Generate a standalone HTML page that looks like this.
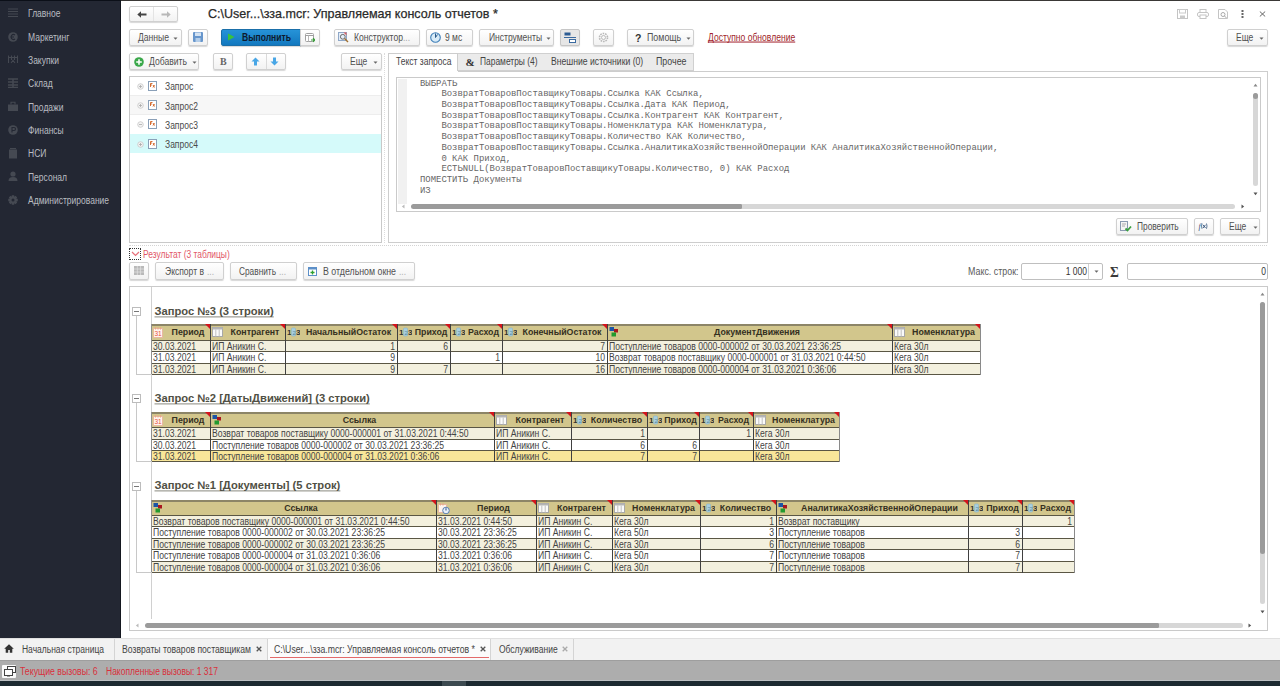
<!DOCTYPE html><html><head><meta charset="utf-8"><style>
*{margin:0;padding:0;box-sizing:border-box}
html,body{width:1280px;height:686px;overflow:hidden;background:#fff;font-family:"Liberation Sans",sans-serif;color:#4a4a4a}
div,span,svg{position:absolute}
.t{white-space:nowrap}
.btn{border:1px solid #d0d0d0;border-radius:2px;background:linear-gradient(#fff,#f2f2f2);box-shadow:0 1px 1px rgba(0,0,0,.16)}
.mono{font-family:"Liberation Mono",monospace;font-size:8.94px;white-space:pre;line-height:10.72px;color:#666}
</style></head><body>
<div style="left:0px;top:0px;width:121px;height:638px;background:#232733"></div>
<div style="left:121px;top:0px;width:1159px;height:1px;background:#3a3836"></div>
<div style="left:0px;top:0px;width:121px;height:1px;background:#0b0f18"></div>
<div style="left:120px;top:0px;width:1px;height:638px;background:#14171f"></div>
<span class="t" style="left:28px;top:16.6px;font-size:10px;line-height:12.0px;font-weight:normal;font-family:'Liberation Sans';color:#b9bcc1;transform:translateY(-9.46px) scaleX(0.85);transform-origin:0 0;">Главное</span>
<span class="t" style="left:28px;top:40.5px;font-size:10px;line-height:12.0px;font-weight:normal;font-family:'Liberation Sans';color:#b9bcc1;transform:translateY(-9.46px) scaleX(0.85);transform-origin:0 0;">Маркетинг</span>
<span class="t" style="left:28px;top:64.3px;font-size:10px;line-height:12.0px;font-weight:normal;font-family:'Liberation Sans';color:#b9bcc1;transform:translateY(-9.46px) scaleX(0.85);transform-origin:0 0;">Закупки</span>
<span class="t" style="left:28px;top:86.89999999999999px;font-size:10px;line-height:12.0px;font-weight:normal;font-family:'Liberation Sans';color:#b9bcc1;transform:translateY(-9.46px) scaleX(0.85);transform-origin:0 0;">Склад</span>
<span class="t" style="left:28px;top:110.69999999999999px;font-size:10px;line-height:12.0px;font-weight:normal;font-family:'Liberation Sans';color:#b9bcc1;transform:translateY(-9.46px) scaleX(0.85);transform-origin:0 0;">Продажи</span>
<span class="t" style="left:28px;top:134.0px;font-size:10px;line-height:12.0px;font-weight:normal;font-family:'Liberation Sans';color:#b9bcc1;transform:translateY(-9.46px) scaleX(0.85);transform-origin:0 0;">Финансы</span>
<span class="t" style="left:28px;top:157.1px;font-size:10px;line-height:12.0px;font-weight:normal;font-family:'Liberation Sans';color:#b9bcc1;transform:translateY(-9.46px) scaleX(0.85);transform-origin:0 0;">НСИ</span>
<span class="t" style="left:28px;top:181.1px;font-size:10px;line-height:12.0px;font-weight:normal;font-family:'Liberation Sans';color:#b9bcc1;transform:translateY(-9.46px) scaleX(0.85);transform-origin:0 0;">Персонал</span>
<span class="t" style="left:28px;top:204.2px;font-size:10px;line-height:12.0px;font-weight:normal;font-family:'Liberation Sans';color:#b9bcc1;transform:translateY(-9.46px) scaleX(0.85);transform-origin:0 0;">Администрирование</span>
<div class="btn" style="left:129px;top:6px;width:49px;height:16px;"></div>
<div style="left:153px;top:7px;width:1px;height:14px;background:#e4e4e4"></div>
<span class="t" style="left:208px;top:19px;font-size:12.6px;line-height:15.12px;font-weight:normal;font-family:'Liberation Sans';color:#2a2a2a;transform:translateY(-11.93px) scaleX(0.9952);transform-origin:0 0;-webkit-text-stroke:0.25px #2a2a2a">C:\User...\зза.mcr: Управляемая консоль отчетов *</span>
<div class="btn" style="left:129px;top:29px;width:53px;height:17px;"></div>
<span class="t" style="left:138px;top:41px;font-size:10px;line-height:12.0px;font-weight:normal;font-family:'Liberation Sans';color:#505050;transform:translateY(-9.46px) scaleX(0.858);transform-origin:0 0;">Данные</span>
<div class="btn" style="left:188px;top:29px;width:20px;height:17px;"></div>
<div style="left:221px;top:29px;width:80px;height:17px;background:linear-gradient(#2693d8,#1278bf);border:1px solid #1a6fa9;border-radius:2px 0 0 2px;box-shadow:0 1px 1px rgba(0,0,0,.16)"></div>
<div class="btn" style="left:300px;top:29px;width:20px;height:17px;border-radius:0 2px 2px 0"></div>
<span class="t" style="left:241.7px;top:41px;font-size:10px;line-height:12.0px;font-weight:bold;font-family:'Liberation Sans';color:#0d1a2e;transform:translateY(-9.46px) scaleX(0.856);transform-origin:0 0;">Выполнить</span>
<div class="btn" style="left:334px;top:29px;width:86px;height:17px;"></div>
<span class="t" style="left:353.5px;top:41px;font-size:10px;line-height:12.0px;font-weight:normal;font-family:'Liberation Sans';color:#505050;transform:translateY(-9.46px) scaleX(0.8594);transform-origin:0 0;">Конструктор</span>
<span class="t" style="left:403px;top:41px;font-size:10px;line-height:12.0px;font-weight:normal;font-family:'Liberation Sans';color:#a8a8a8;transform:translateY(-9.46px) scaleX(0.85);transform-origin:0 0;">...</span>
<div class="btn" style="left:426px;top:29px;width:47px;height:17px;"></div>
<span class="t" style="left:445.4px;top:41px;font-size:10px;line-height:12.0px;font-weight:normal;font-family:'Liberation Sans';color:#505050;transform:translateY(-9.46px) scaleX(0.85);transform-origin:0 0;">9 мс</span>
<div class="btn" style="left:479px;top:29px;width:75px;height:17px;"></div>
<span class="t" style="left:488.5px;top:41px;font-size:10px;line-height:12.0px;font-weight:normal;font-family:'Liberation Sans';color:#505050;transform:translateY(-9.46px) scaleX(0.85);transform-origin:0 0;">Инструменты</span>
<div style="left:560px;top:29px;width:20px;height:17px;background:#e6e6e6;border:1px solid #c6c6c6;border-radius:2px;box-shadow:0 1px 1px rgba(0,0,0,.12)"></div>
<div class="btn" style="left:593px;top:29px;width:21px;height:17px;"></div>
<div class="btn" style="left:627px;top:29px;width:67px;height:17px;"></div>
<span class="t" style="left:646.9px;top:41px;font-size:10px;line-height:12.0px;font-weight:normal;font-family:'Liberation Sans';color:#505050;transform:translateY(-9.46px) scaleX(0.8855);transform-origin:0 0;">Помощь</span>
<span class="t" style="left:708.3px;top:41px;font-size:10px;line-height:12.0px;font-weight:normal;font-family:'Liberation Sans';color:#a11f2b;transform:translateY(-9.46px) scaleX(0.8554);transform-origin:0 0;text-decoration:underline;text-decoration-skip-ink:none">Доступно обновление</span>
<div class="btn" style="left:1227px;top:29px;width:41px;height:17px;"></div>
<span class="t" style="left:1236px;top:41px;font-size:10px;line-height:12.0px;font-weight:normal;font-family:'Liberation Sans';color:#505050;transform:translateY(-9.46px) scaleX(0.85);transform-origin:0 0;">Еще</span>
<div class="btn" style="left:129px;top:53px;width:70px;height:17px;"></div>
<span class="t" style="left:148.75px;top:65px;font-size:10px;line-height:12.0px;font-weight:normal;font-family:'Liberation Sans';color:#505050;transform:translateY(-9.46px) scaleX(0.8598);transform-origin:0 0;">Добавить</span>
<div class="btn" style="left:213px;top:53px;width:20px;height:17px;"></div>
<div class="btn" style="left:246px;top:53px;width:40px;height:17px;"></div>
<div style="left:266px;top:54px;width:1px;height:15px;background:#dadada"></div>
<div class="btn" style="left:341px;top:53px;width:41px;height:17px;"></div>
<span class="t" style="left:350px;top:65px;font-size:10px;line-height:12.0px;font-weight:normal;font-family:'Liberation Sans';color:#505050;transform:translateY(-9.46px) scaleX(0.85);transform-origin:0 0;">Еще</span>
<div style="left:384px;top:53px;width:1px;height:190px;border-left:1px dotted #dcdcdc"></div>
<div style="left:129px;top:76px;width:253px;height:167px;border:1px solid #c9c9c9;background:#fff"></div>
<div style="left:130px;top:95px;width:251px;height:20px;background:#f7f7f7;border-top:1px solid #ededed;border-bottom:1px solid #ededed"></div>
<div style="left:130px;top:134px;width:251px;height:19px;background:#d5fafa"></div>
<span class="t" style="left:165.4px;top:90.3px;font-size:10px;line-height:12.0px;font-weight:normal;font-family:'Liberation Sans';color:#4a4a4a;transform:translateY(-9.46px) scaleX(0.85);transform-origin:0 0;">Запрос</span>
<span class="t" style="left:165.4px;top:109.8px;font-size:10px;line-height:12.0px;font-weight:normal;font-family:'Liberation Sans';color:#4a4a4a;transform:translateY(-9.46px) scaleX(0.85);transform-origin:0 0;">Запрос2</span>
<span class="t" style="left:165.4px;top:128.8px;font-size:10px;line-height:12.0px;font-weight:normal;font-family:'Liberation Sans';color:#4a4a4a;transform:translateY(-9.46px) scaleX(0.85);transform-origin:0 0;">Запрос3</span>
<span class="t" style="left:165.4px;top:148.3px;font-size:10px;line-height:12.0px;font-weight:normal;font-family:'Liberation Sans';color:#4a4a4a;transform:translateY(-9.46px) scaleX(0.85);transform-origin:0 0;">Запрос4</span>
<div style="left:388px;top:71px;width:880px;height:172px;border:1px solid #cdcdcd"></div>
<div style="left:388px;top:53px;width:70px;height:19px;background:#fff;border:1px solid #cdcdcd;border-bottom:none"></div>
<div style="left:458px;top:53px;width:86px;height:18px;background:#ebebeb;border:1px solid #d0d0d0;border-left:none"></div>
<div style="left:543px;top:53px;width:107px;height:18px;background:#ebebeb;border:1px solid #d0d0d0;border-left:none"></div>
<div style="left:649px;top:53px;width:45px;height:18px;background:#ebebeb;border:1px solid #d0d0d0;border-left:none"></div>
<div style="left:389px;top:71px;width:69px;height:1px;background:#fff"></div>
<span class="t" style="left:395.9px;top:65px;font-size:10px;line-height:12.0px;font-weight:normal;font-family:'Liberation Sans';color:#444;transform:translateY(-9.46px) scaleX(0.8512);transform-origin:0 0;">Текст запроса</span>
<span class="t" style="left:479.6px;top:65px;font-size:10px;line-height:12.0px;font-weight:normal;font-family:'Liberation Sans';color:#444;transform:translateY(-9.46px) scaleX(0.8418);transform-origin:0 0;">Параметры (4)</span>
<span class="t" style="left:551.3px;top:65px;font-size:10px;line-height:12.0px;font-weight:normal;font-family:'Liberation Sans';color:#444;transform:translateY(-9.46px) scaleX(0.8625);transform-origin:0 0;">Внешние источники (0)</span>
<span class="t" style="left:656px;top:65px;font-size:10px;line-height:12.0px;font-weight:normal;font-family:'Liberation Sans';color:#444;transform:translateY(-9.46px) scaleX(0.886);transform-origin:0 0;">Прочее</span>
<div style="left:396px;top:77px;width:865px;height:135px;border:1px solid #cacaca;background:#fff"></div>
<div style="left:398px;top:79px;width:9px;height:125px;background:#f1f1f1"></div>
<div class="mono" style="left:420px;top:78.5px;width:830px;height:121px;overflow:hidden">ВЫБРАТЬ
    ВозвратТоваровПоставщикуТовары.Ссылка КАК Ссылка,
    ВозвратТоваровПоставщикуТовары.Ссылка.Дата КАК Период,
    ВозвратТоваровПоставщикуТовары.Ссылка.Контрагент КАК Контрагент,
    ВозвратТоваровПоставщикуТовары.Номенклатура КАК Номенклатура,
    ВозвратТоваровПоставщикуТовары.Количество КАК Количество,
    ВозвратТоваровПоставщикуТовары.Ссылка.АналитикаХозяйственнойОперации КАК АналитикаХозяйственнойОперации,
    0 КАК Приход,
    ЕСТЬNULL(ВозвратТоваровПоставщикуТовары.Количество, 0) КАК Расход
ПОМЕСТИТЬ Документы
ИЗ</div>
<div style="left:411px;top:204px;width:332px;height:5px;background:#9b9b9b;border-radius:3px"></div>
<div style="left:742px;top:204px;width:493px;height:5px;background:#d7d7d7;border-radius:0 3px 3px 0"></div>
<div style="left:1253px;top:93px;width:5px;height:93px;background:#d7d7d7;border-radius:3px"></div>
<div style="left:1253px;top:93px;width:5px;height:6px;background:#9b9b9b;border-radius:3px"></div>
<div class="btn" style="left:1116px;top:218px;width:72px;height:17px;"></div>
<span class="t" style="left:1136.6px;top:230px;font-size:10px;line-height:12.0px;font-weight:normal;font-family:'Liberation Sans';color:#505050;transform:translateY(-9.46px) scaleX(0.8338);transform-origin:0 0;">Проверить</span>
<div class="btn" style="left:1194px;top:218px;width:20px;height:17px;"></div>
<div class="btn" style="left:1220px;top:218px;width:40px;height:17px;"></div>
<span class="t" style="left:1229.2px;top:230px;font-size:10px;line-height:12.0px;font-weight:normal;font-family:'Liberation Sans';color:#505050;transform:translateY(-9.46px) scaleX(0.85);transform-origin:0 0;">Еще</span>
<div style="left:129px;top:245px;width:1138px;height:1px;border-top:1px dotted #d4d4d4"></div>
<div style="left:129px;top:248px;width:12px;height:12px;border:1px dotted #333"></div>
<span class="t" style="left:142.8px;top:257.5px;font-size:10px;line-height:12.0px;font-weight:normal;font-family:'Liberation Sans';color:#e25868;transform:translateY(-9.46px) scaleX(0.8425);transform-origin:0 0;">Результат (3 таблицы)</span>
<div class="btn" style="left:129px;top:262px;width:20px;height:18px;"></div>
<div class="btn" style="left:155px;top:262px;width:69px;height:18px;"></div>
<span class="t" style="left:164.7px;top:275px;font-size:10px;line-height:12.0px;font-weight:normal;font-family:'Liberation Sans';color:#505050;transform:translateY(-9.46px) scaleX(0.854);transform-origin:0 0;">Экспорт в</span>
<span class="t" style="left:207px;top:275px;font-size:10px;line-height:12.0px;font-weight:normal;font-family:'Liberation Sans';color:#b0b0b0;transform:translateY(-9.46px) scaleX(0.85);transform-origin:0 0;">...</span>
<div class="btn" style="left:230px;top:262px;width:67px;height:18px;"></div>
<span class="t" style="left:239.4px;top:275px;font-size:10px;line-height:12.0px;font-weight:normal;font-family:'Liberation Sans';color:#505050;transform:translateY(-9.46px) scaleX(0.8304);transform-origin:0 0;">Сравнить</span>
<span class="t" style="left:279px;top:275px;font-size:10px;line-height:12.0px;font-weight:normal;font-family:'Liberation Sans';color:#b0b0b0;transform:translateY(-9.46px) scaleX(0.85);transform-origin:0 0;">...</span>
<div class="btn" style="left:303px;top:262px;width:112px;height:18px;"></div>
<span class="t" style="left:322.8px;top:275px;font-size:10px;line-height:12.0px;font-weight:normal;font-family:'Liberation Sans';color:#505050;transform:translateY(-9.46px) scaleX(0.8805);transform-origin:0 0;">В отдельном окне</span>
<span class="t" style="left:399px;top:275px;font-size:10px;line-height:12.0px;font-weight:normal;font-family:'Liberation Sans';color:#b0b0b0;transform:translateY(-9.46px) scaleX(0.85);transform-origin:0 0;">...</span>
<span class="t" style="left:967.5px;top:275px;font-size:10px;line-height:12.0px;font-weight:normal;font-family:'Liberation Sans';color:#5a5a5a;transform:translateY(-9.46px) scaleX(0.8874);transform-origin:0 0;">Макс. строк:</span>
<div style="left:1021px;top:263px;width:82px;height:17px;border:1px solid #bfbfbf;border-radius:2px;background:#fff"></div>
<div style="left:1088px;top:264px;width:1px;height:15px;background:#d0d0d0"></div>
<span class="t" style="left:1086.5px;top:275px;font-size:10px;line-height:12.0px;font-weight:normal;font-family:'Liberation Sans';color:#333;transform:translateY(-9.46px) translateX(-100%) scaleX(0.85);transform-origin:100% 0;">1 000</span>
<span class="t" style="left:1110.3px;top:277px;font-size:15px;line-height:18.0px;font-weight:bold;font-family:'Liberation Serif';color:#3a3a3a;transform:translateY(-14.20px) scaleX(0.9);transform-origin:0 0;">Σ</span>
<div style="left:1127px;top:263px;width:141px;height:17px;border:1px solid #bfbfbf;border-radius:2px;background:#fff"></div>
<span class="t" style="left:1266px;top:275px;font-size:10px;line-height:12.0px;font-weight:normal;font-family:'Liberation Sans';color:#333;transform:translateY(-9.46px) translateX(-100%) scaleX(0.85);transform-origin:100% 0;">0</span>
<div style="left:129px;top:286px;width:1139px;height:345px;border:1px solid #cacaca;background:#fff"></div>
<div style="left:151px;top:287px;width:1px;height:332px;background:#d0d0d0"></div>
<div style="left:1260px;top:302px;width:5px;height:302px;background:#d7d7d7;border-radius:3px"></div>
<div style="left:1260px;top:302px;width:5px;height:252px;background:#9b9b9b;border-radius:3px"></div>
<div style="left:145px;top:623px;width:1015px;height:5px;background:#9b9b9b;border-radius:3px"></div>
<div style="left:1159px;top:623px;width:84px;height:5px;background:#d7d7d7;border-radius:0 3px 3px 0"></div>
<span class="t" style="left:154.5px;top:315.5px;font-size:11.2px;line-height:13.44px;font-weight:bold;font-family:'Liberation Sans';color:#505044;transform:translateY(-10.60px) scaleX(1);transform-origin:0 0;text-decoration:underline;text-decoration-color:#8a8a80;text-decoration-skip-ink:none">Запрос №3 (3 строки)</span>
<div style="left:151px;top:324px;width:830px;height:16px;background:#d2c68c"></div>
<div style="left:151px;top:340px;width:830px;height:11px;background:#f3f0de"></div>
<div style="left:151px;top:351px;width:830px;height:12px;background:#fff"></div>
<div style="left:151px;top:363px;width:830px;height:11px;background:#f3f0de"></div>
<div style="left:151px;top:324px;width:830px;height:2px;background:#8c8567"></div>
<div style="left:151px;top:340px;width:830px;height:1px;background:#5a5644"></div>
<div style="left:151px;top:351px;width:830px;height:1px;background:#5a5644"></div>
<div style="left:151px;top:363px;width:830px;height:1px;background:#5a5644"></div>
<div style="left:151px;top:374px;width:830px;height:1px;background:#5a5644"></div>
<div style="left:210px;top:324px;width:1px;height:51px;background:#404040"></div>
<div style="left:285px;top:324px;width:1px;height:51px;background:#404040"></div>
<div style="left:397px;top:324px;width:1px;height:51px;background:#404040"></div>
<div style="left:450px;top:324px;width:1px;height:51px;background:#404040"></div>
<div style="left:502px;top:324px;width:1px;height:51px;background:#404040"></div>
<div style="left:607px;top:324px;width:1px;height:51px;background:#404040"></div>
<div style="left:892px;top:324px;width:1px;height:51px;background:#404040"></div>
<div style="left:151px;top:324px;width:1px;height:51px;background:#8f8f8f"></div>
<div style="left:980px;top:324px;width:1px;height:51px;background:#8a8a8a"></div>
<div style="left:205px;top:324px;width:0;height:0;border-top:5px solid #d4141c;border-left:5px solid transparent"></div>
<span class="t" style="left:188.0px;top:335.4px;font-size:8.8px;line-height:10.56px;font-weight:bold;font-family:'Liberation Sans';color:#34301f;transform:translateY(-8.33px) translateX(-50%) scaleX(1);transform-origin:50% 0;">Период</span>
<svg style="left:153px;top:327px;" width="11" height="11" viewBox="0 0 11 11"><rect x="0.5" y="1.5" width="9" height="9" fill="#fff4ee" stroke="#e8b8a0"/><path d="M2.5 0 V2.5 M5 0 V2.5 M7.5 0 V2.5" stroke="#e8a888"/><text x="5" y="9" font-size="6.5" font-family="Liberation Sans" fill="#e8503a" text-anchor="middle">31</text></svg>
<div style="left:280px;top:324px;width:0;height:0;border-top:5px solid #d4141c;border-left:5px solid transparent"></div>
<span class="t" style="left:255.0px;top:335.4px;font-size:8.8px;line-height:10.56px;font-weight:bold;font-family:'Liberation Sans';color:#34301f;transform:translateY(-8.33px) translateX(-50%) scaleX(1);transform-origin:50% 0;">Контрагент</span>
<svg style="left:212px;top:327px;" width="11" height="10" viewBox="0 0 11 10"><rect x="0.5" y="0.5" width="10" height="9" fill="#fafafa" stroke="#a8a8a8"/><rect x="0.5" y="0.5" width="10" height="2" fill="#b5b5b5"/><path d="M3.8 2.5 V9.5 M7.2 2.5 V9.5" stroke="#c0c0c0"/></svg>
<div style="left:392px;top:324px;width:0;height:0;border-top:5px solid #d4141c;border-left:5px solid transparent"></div>
<span class="t" style="left:348.5px;top:335.4px;font-size:8.8px;line-height:10.56px;font-weight:bold;font-family:'Liberation Sans';color:#34301f;transform:translateY(-8.33px) translateX(-50%) scaleX(1);transform-origin:50% 0;">НачальныйОстаток</span>
<svg style="left:287px;top:327px;" width="13" height="10" viewBox="0 0 13 10"><text x="0" y="8" font-size="8" font-weight="bold" font-family="Liberation Sans" fill="#333">1</text><rect x="4.5" y="1" width="4" height="8" rx="1" fill="#a7cfe0" stroke="#86b4c8" stroke-width="0.6"/><text x="5.4" y="7.6" font-size="6" font-family="Liberation Sans" fill="#5a8aa0">2</text><text x="9" y="8" font-size="8" font-weight="bold" font-family="Liberation Sans" fill="#333">3</text></svg>
<div style="left:445px;top:324px;width:0;height:0;border-top:5px solid #d4141c;border-left:5px solid transparent"></div>
<span class="t" style="left:431.0px;top:335.4px;font-size:8.8px;line-height:10.56px;font-weight:bold;font-family:'Liberation Sans';color:#34301f;transform:translateY(-8.33px) translateX(-50%) scaleX(1);transform-origin:50% 0;">Приход</span>
<svg style="left:399px;top:327px;" width="13" height="10" viewBox="0 0 13 10"><text x="0" y="8" font-size="8" font-weight="bold" font-family="Liberation Sans" fill="#333">1</text><rect x="4.5" y="1" width="4" height="8" rx="1" fill="#a7cfe0" stroke="#86b4c8" stroke-width="0.6"/><text x="5.4" y="7.6" font-size="6" font-family="Liberation Sans" fill="#5a8aa0">2</text><text x="9" y="8" font-size="8" font-weight="bold" font-family="Liberation Sans" fill="#333">3</text></svg>
<div style="left:497px;top:324px;width:0;height:0;border-top:5px solid #d4141c;border-left:5px solid transparent"></div>
<span class="t" style="left:483.5px;top:335.4px;font-size:8.8px;line-height:10.56px;font-weight:bold;font-family:'Liberation Sans';color:#34301f;transform:translateY(-8.33px) translateX(-50%) scaleX(1);transform-origin:50% 0;">Расход</span>
<svg style="left:452px;top:327px;" width="13" height="10" viewBox="0 0 13 10"><text x="0" y="8" font-size="8" font-weight="bold" font-family="Liberation Sans" fill="#333">1</text><rect x="4.5" y="1" width="4" height="8" rx="1" fill="#a7cfe0" stroke="#86b4c8" stroke-width="0.6"/><text x="5.4" y="7.6" font-size="6" font-family="Liberation Sans" fill="#5a8aa0">2</text><text x="9" y="8" font-size="8" font-weight="bold" font-family="Liberation Sans" fill="#333">3</text></svg>
<div style="left:602px;top:324px;width:0;height:0;border-top:5px solid #d4141c;border-left:5px solid transparent"></div>
<span class="t" style="left:562.0px;top:335.4px;font-size:8.8px;line-height:10.56px;font-weight:bold;font-family:'Liberation Sans';color:#34301f;transform:translateY(-8.33px) translateX(-50%) scaleX(1);transform-origin:50% 0;">КонечныйОстаток</span>
<svg style="left:504px;top:327px;" width="13" height="10" viewBox="0 0 13 10"><text x="0" y="8" font-size="8" font-weight="bold" font-family="Liberation Sans" fill="#333">1</text><rect x="4.5" y="1" width="4" height="8" rx="1" fill="#a7cfe0" stroke="#86b4c8" stroke-width="0.6"/><text x="5.4" y="7.6" font-size="6" font-family="Liberation Sans" fill="#5a8aa0">2</text><text x="9" y="8" font-size="8" font-weight="bold" font-family="Liberation Sans" fill="#333">3</text></svg>
<div style="left:887px;top:324px;width:0;height:0;border-top:5px solid #d4141c;border-left:5px solid transparent"></div>
<span class="t" style="left:757.0px;top:335.4px;font-size:8.8px;line-height:10.56px;font-weight:bold;font-family:'Liberation Sans';color:#34301f;transform:translateY(-8.33px) translateX(-50%) scaleX(1);transform-origin:50% 0;">ДокументДвижения</span>
<svg style="left:609px;top:327px;" width="11" height="11" viewBox="0 0 11 11"><rect x="0.5" y="0" width="4.5" height="4" fill="#1b55a6"/><rect x="5" y="2" width="4" height="3.5" fill="#a8161f"/><rect x="2.5" y="5.5" width="4.5" height="4" fill="#229a2e"/></svg>
<div style="left:975px;top:324px;width:0;height:0;border-top:5px solid #d4141c;border-left:5px solid transparent"></div>
<span class="t" style="left:943.5px;top:335.4px;font-size:8.8px;line-height:10.56px;font-weight:bold;font-family:'Liberation Sans';color:#34301f;transform:translateY(-8.33px) translateX(-50%) scaleX(1);transform-origin:50% 0;">Номенклатура</span>
<svg style="left:894px;top:327px;" width="11" height="10" viewBox="0 0 11 10"><rect x="0.5" y="0.5" width="10" height="9" fill="#fafafa" stroke="#a8a8a8"/><rect x="0.5" y="0.5" width="10" height="2" fill="#b5b5b5"/><path d="M3.8 2.5 V9.5 M7.2 2.5 V9.5" stroke="#c0c0c0"/></svg>
<span class="t" style="left:153px;top:350.2px;font-size:10px;line-height:12.0px;font-weight:normal;font-family:'Liberation Sans';color:#444;transform:translateY(-9.46px) scaleX(0.86);transform-origin:0 0;">30.03.2021</span>
<span class="t" style="left:212px;top:350.2px;font-size:10px;line-height:12.0px;font-weight:normal;font-family:'Liberation Sans';color:#444;transform:translateY(-9.46px) scaleX(0.86);transform-origin:0 0;">ИП Аникин С.</span>
<span class="t" style="left:394.5px;top:350.2px;font-size:10px;line-height:12.0px;font-weight:normal;font-family:'Liberation Sans';color:#444;transform:translateY(-9.46px) translateX(-100%) scaleX(0.86);transform-origin:100% 0;">1</span>
<span class="t" style="left:447.5px;top:350.2px;font-size:10px;line-height:12.0px;font-weight:normal;font-family:'Liberation Sans';color:#444;transform:translateY(-9.46px) translateX(-100%) scaleX(0.86);transform-origin:100% 0;">6</span>
<span class="t" style="left:604.5px;top:350.2px;font-size:10px;line-height:12.0px;font-weight:normal;font-family:'Liberation Sans';color:#444;transform:translateY(-9.46px) translateX(-100%) scaleX(0.86);transform-origin:100% 0;">7</span>
<span class="t" style="left:609px;top:350.2px;font-size:10px;line-height:12.0px;font-weight:normal;font-family:'Liberation Sans';color:#444;transform:translateY(-9.46px) scaleX(0.86);transform-origin:0 0;">Поступление товаров 0000-000002 от 30.03.2021 23:36:25</span>
<span class="t" style="left:894px;top:350.2px;font-size:10px;line-height:12.0px;font-weight:normal;font-family:'Liberation Sans';color:#444;transform:translateY(-9.46px) scaleX(0.86);transform-origin:0 0;">Кега 30л</span>
<span class="t" style="left:153px;top:361.2px;font-size:10px;line-height:12.0px;font-weight:normal;font-family:'Liberation Sans';color:#444;transform:translateY(-9.46px) scaleX(0.86);transform-origin:0 0;">31.03.2021</span>
<span class="t" style="left:212px;top:361.2px;font-size:10px;line-height:12.0px;font-weight:normal;font-family:'Liberation Sans';color:#444;transform:translateY(-9.46px) scaleX(0.86);transform-origin:0 0;">ИП Аникин С.</span>
<span class="t" style="left:394.5px;top:361.2px;font-size:10px;line-height:12.0px;font-weight:normal;font-family:'Liberation Sans';color:#444;transform:translateY(-9.46px) translateX(-100%) scaleX(0.86);transform-origin:100% 0;">9</span>
<span class="t" style="left:499.5px;top:361.2px;font-size:10px;line-height:12.0px;font-weight:normal;font-family:'Liberation Sans';color:#444;transform:translateY(-9.46px) translateX(-100%) scaleX(0.86);transform-origin:100% 0;">1</span>
<span class="t" style="left:604.5px;top:361.2px;font-size:10px;line-height:12.0px;font-weight:normal;font-family:'Liberation Sans';color:#444;transform:translateY(-9.46px) translateX(-100%) scaleX(0.86);transform-origin:100% 0;">10</span>
<span class="t" style="left:609px;top:361.2px;font-size:10px;line-height:12.0px;font-weight:normal;font-family:'Liberation Sans';color:#444;transform:translateY(-9.46px) scaleX(0.86);transform-origin:0 0;">Возврат товаров поставщику 0000-000001 от 31.03.2021 0:44:50</span>
<span class="t" style="left:894px;top:361.2px;font-size:10px;line-height:12.0px;font-weight:normal;font-family:'Liberation Sans';color:#444;transform:translateY(-9.46px) scaleX(0.86);transform-origin:0 0;">Кега 30л</span>
<span class="t" style="left:153px;top:373.2px;font-size:10px;line-height:12.0px;font-weight:normal;font-family:'Liberation Sans';color:#444;transform:translateY(-9.46px) scaleX(0.86);transform-origin:0 0;">31.03.2021</span>
<span class="t" style="left:212px;top:373.2px;font-size:10px;line-height:12.0px;font-weight:normal;font-family:'Liberation Sans';color:#444;transform:translateY(-9.46px) scaleX(0.86);transform-origin:0 0;">ИП Аникин С.</span>
<span class="t" style="left:394.5px;top:373.2px;font-size:10px;line-height:12.0px;font-weight:normal;font-family:'Liberation Sans';color:#444;transform:translateY(-9.46px) translateX(-100%) scaleX(0.86);transform-origin:100% 0;">9</span>
<span class="t" style="left:447.5px;top:373.2px;font-size:10px;line-height:12.0px;font-weight:normal;font-family:'Liberation Sans';color:#444;transform:translateY(-9.46px) translateX(-100%) scaleX(0.86);transform-origin:100% 0;">7</span>
<span class="t" style="left:604.5px;top:373.2px;font-size:10px;line-height:12.0px;font-weight:normal;font-family:'Liberation Sans';color:#444;transform:translateY(-9.46px) translateX(-100%) scaleX(0.86);transform-origin:100% 0;">16</span>
<span class="t" style="left:609px;top:373.2px;font-size:10px;line-height:12.0px;font-weight:normal;font-family:'Liberation Sans';color:#444;transform:translateY(-9.46px) scaleX(0.86);transform-origin:0 0;">Поступление товаров 0000-000004 от 31.03.2021 0:36:06</span>
<span class="t" style="left:894px;top:373.2px;font-size:10px;line-height:12.0px;font-weight:normal;font-family:'Liberation Sans';color:#444;transform:translateY(-9.46px) scaleX(0.86);transform-origin:0 0;">Кега 30л</span>
<span class="t" style="left:154.5px;top:402.5px;font-size:11.2px;line-height:13.44px;font-weight:bold;font-family:'Liberation Sans';color:#505044;transform:translateY(-10.60px) scaleX(1);transform-origin:0 0;text-decoration:underline;text-decoration-color:#8a8a80;text-decoration-skip-ink:none">Запрос №2 [ДатыДвижений] (3 строки)</span>
<div style="left:151px;top:412px;width:689px;height:15px;background:#d2c68c"></div>
<div style="left:151px;top:427px;width:689px;height:12px;background:#f3f0de"></div>
<div style="left:151px;top:439px;width:689px;height:11px;background:#fff"></div>
<div style="left:151px;top:450px;width:689px;height:11px;background:#f8e699"></div>
<div style="left:151px;top:412px;width:689px;height:2px;background:#8c8567"></div>
<div style="left:151px;top:427px;width:689px;height:1px;background:#5a5644"></div>
<div style="left:151px;top:439px;width:689px;height:1px;background:#5a5644"></div>
<div style="left:151px;top:450px;width:689px;height:1px;background:#5a5644"></div>
<div style="left:151px;top:461px;width:689px;height:1px;background:#5a5644"></div>
<div style="left:210px;top:412px;width:1px;height:50px;background:#404040"></div>
<div style="left:494px;top:412px;width:1px;height:50px;background:#404040"></div>
<div style="left:571px;top:412px;width:1px;height:50px;background:#404040"></div>
<div style="left:647px;top:412px;width:1px;height:50px;background:#404040"></div>
<div style="left:699px;top:412px;width:1px;height:50px;background:#404040"></div>
<div style="left:753px;top:412px;width:1px;height:50px;background:#404040"></div>
<div style="left:151px;top:412px;width:1px;height:50px;background:#8f8f8f"></div>
<div style="left:839px;top:412px;width:1px;height:50px;background:#8a8a8a"></div>
<div style="left:205px;top:412px;width:0;height:0;border-top:5px solid #d4141c;border-left:5px solid transparent"></div>
<span class="t" style="left:188.0px;top:423.4px;font-size:8.8px;line-height:10.56px;font-weight:bold;font-family:'Liberation Sans';color:#34301f;transform:translateY(-8.33px) translateX(-50%) scaleX(1);transform-origin:50% 0;">Период</span>
<svg style="left:153px;top:415px;" width="11" height="11" viewBox="0 0 11 11"><rect x="0.5" y="1.5" width="9" height="9" fill="#fff4ee" stroke="#e8b8a0"/><path d="M2.5 0 V2.5 M5 0 V2.5 M7.5 0 V2.5" stroke="#e8a888"/><text x="5" y="9" font-size="6.5" font-family="Liberation Sans" fill="#e8503a" text-anchor="middle">31</text></svg>
<div style="left:489px;top:412px;width:0;height:0;border-top:5px solid #d4141c;border-left:5px solid transparent"></div>
<span class="t" style="left:359.5px;top:423.4px;font-size:8.8px;line-height:10.56px;font-weight:bold;font-family:'Liberation Sans';color:#34301f;transform:translateY(-8.33px) translateX(-50%) scaleX(1);transform-origin:50% 0;">Ссылка</span>
<svg style="left:212px;top:415px;" width="11" height="11" viewBox="0 0 11 11"><rect x="0.5" y="0" width="4.5" height="4" fill="#1b55a6"/><rect x="5" y="2" width="4" height="3.5" fill="#a8161f"/><rect x="2.5" y="5.5" width="4.5" height="4" fill="#229a2e"/></svg>
<div style="left:566px;top:412px;width:0;height:0;border-top:5px solid #d4141c;border-left:5px solid transparent"></div>
<span class="t" style="left:540.0px;top:423.4px;font-size:8.8px;line-height:10.56px;font-weight:bold;font-family:'Liberation Sans';color:#34301f;transform:translateY(-8.33px) translateX(-50%) scaleX(1);transform-origin:50% 0;">Контрагент</span>
<svg style="left:496px;top:415px;" width="11" height="10" viewBox="0 0 11 10"><rect x="0.5" y="0.5" width="10" height="9" fill="#fafafa" stroke="#a8a8a8"/><rect x="0.5" y="0.5" width="10" height="2" fill="#b5b5b5"/><path d="M3.8 2.5 V9.5 M7.2 2.5 V9.5" stroke="#c0c0c0"/></svg>
<div style="left:642px;top:412px;width:0;height:0;border-top:5px solid #d4141c;border-left:5px solid transparent"></div>
<span class="t" style="left:616.5px;top:423.4px;font-size:8.8px;line-height:10.56px;font-weight:bold;font-family:'Liberation Sans';color:#34301f;transform:translateY(-8.33px) translateX(-50%) scaleX(1);transform-origin:50% 0;">Количество</span>
<svg style="left:573px;top:415px;" width="13" height="10" viewBox="0 0 13 10"><text x="0" y="8" font-size="8" font-weight="bold" font-family="Liberation Sans" fill="#333">1</text><rect x="4.5" y="1" width="4" height="8" rx="1" fill="#a7cfe0" stroke="#86b4c8" stroke-width="0.6"/><text x="5.4" y="7.6" font-size="6" font-family="Liberation Sans" fill="#5a8aa0">2</text><text x="9" y="8" font-size="8" font-weight="bold" font-family="Liberation Sans" fill="#333">3</text></svg>
<div style="left:694px;top:412px;width:0;height:0;border-top:5px solid #d4141c;border-left:5px solid transparent"></div>
<span class="t" style="left:680.5px;top:423.4px;font-size:8.8px;line-height:10.56px;font-weight:bold;font-family:'Liberation Sans';color:#34301f;transform:translateY(-8.33px) translateX(-50%) scaleX(1);transform-origin:50% 0;">Приход</span>
<svg style="left:649px;top:415px;" width="13" height="10" viewBox="0 0 13 10"><text x="0" y="8" font-size="8" font-weight="bold" font-family="Liberation Sans" fill="#333">1</text><rect x="4.5" y="1" width="4" height="8" rx="1" fill="#a7cfe0" stroke="#86b4c8" stroke-width="0.6"/><text x="5.4" y="7.6" font-size="6" font-family="Liberation Sans" fill="#5a8aa0">2</text><text x="9" y="8" font-size="8" font-weight="bold" font-family="Liberation Sans" fill="#333">3</text></svg>
<div style="left:748px;top:412px;width:0;height:0;border-top:5px solid #d4141c;border-left:5px solid transparent"></div>
<span class="t" style="left:733.5px;top:423.4px;font-size:8.8px;line-height:10.56px;font-weight:bold;font-family:'Liberation Sans';color:#34301f;transform:translateY(-8.33px) translateX(-50%) scaleX(1);transform-origin:50% 0;">Расход</span>
<svg style="left:701px;top:415px;" width="13" height="10" viewBox="0 0 13 10"><text x="0" y="8" font-size="8" font-weight="bold" font-family="Liberation Sans" fill="#333">1</text><rect x="4.5" y="1" width="4" height="8" rx="1" fill="#a7cfe0" stroke="#86b4c8" stroke-width="0.6"/><text x="5.4" y="7.6" font-size="6" font-family="Liberation Sans" fill="#5a8aa0">2</text><text x="9" y="8" font-size="8" font-weight="bold" font-family="Liberation Sans" fill="#333">3</text></svg>
<div style="left:834px;top:412px;width:0;height:0;border-top:5px solid #d4141c;border-left:5px solid transparent"></div>
<span class="t" style="left:803.5px;top:423.4px;font-size:8.8px;line-height:10.56px;font-weight:bold;font-family:'Liberation Sans';color:#34301f;transform:translateY(-8.33px) translateX(-50%) scaleX(1);transform-origin:50% 0;">Номенклатура</span>
<svg style="left:755px;top:415px;" width="11" height="10" viewBox="0 0 11 10"><rect x="0.5" y="0.5" width="10" height="9" fill="#fafafa" stroke="#a8a8a8"/><rect x="0.5" y="0.5" width="10" height="2" fill="#b5b5b5"/><path d="M3.8 2.5 V9.5 M7.2 2.5 V9.5" stroke="#c0c0c0"/></svg>
<span class="t" style="left:153px;top:437.2px;font-size:10px;line-height:12.0px;font-weight:normal;font-family:'Liberation Sans';color:#444;transform:translateY(-9.46px) scaleX(0.86);transform-origin:0 0;">31.03.2021</span>
<span class="t" style="left:212px;top:437.2px;font-size:10px;line-height:12.0px;font-weight:normal;font-family:'Liberation Sans';color:#444;transform:translateY(-9.46px) scaleX(0.86);transform-origin:0 0;">Возврат товаров поставщику 0000-000001 от 31.03.2021 0:44:50</span>
<span class="t" style="left:496px;top:437.2px;font-size:10px;line-height:12.0px;font-weight:normal;font-family:'Liberation Sans';color:#444;transform:translateY(-9.46px) scaleX(0.86);transform-origin:0 0;">ИП Аникин С.</span>
<span class="t" style="left:644.5px;top:437.2px;font-size:10px;line-height:12.0px;font-weight:normal;font-family:'Liberation Sans';color:#444;transform:translateY(-9.46px) translateX(-100%) scaleX(0.86);transform-origin:100% 0;">1</span>
<span class="t" style="left:750.5px;top:437.2px;font-size:10px;line-height:12.0px;font-weight:normal;font-family:'Liberation Sans';color:#444;transform:translateY(-9.46px) translateX(-100%) scaleX(0.86);transform-origin:100% 0;">1</span>
<span class="t" style="left:755px;top:437.2px;font-size:10px;line-height:12.0px;font-weight:normal;font-family:'Liberation Sans';color:#444;transform:translateY(-9.46px) scaleX(0.86);transform-origin:0 0;">Кега 30л</span>
<span class="t" style="left:153px;top:449.2px;font-size:10px;line-height:12.0px;font-weight:normal;font-family:'Liberation Sans';color:#444;transform:translateY(-9.46px) scaleX(0.86);transform-origin:0 0;">30.03.2021</span>
<span class="t" style="left:212px;top:449.2px;font-size:10px;line-height:12.0px;font-weight:normal;font-family:'Liberation Sans';color:#444;transform:translateY(-9.46px) scaleX(0.86);transform-origin:0 0;">Поступление товаров 0000-000002 от 30.03.2021 23:36:25</span>
<span class="t" style="left:496px;top:449.2px;font-size:10px;line-height:12.0px;font-weight:normal;font-family:'Liberation Sans';color:#444;transform:translateY(-9.46px) scaleX(0.86);transform-origin:0 0;">ИП Аникин С.</span>
<span class="t" style="left:644.5px;top:449.2px;font-size:10px;line-height:12.0px;font-weight:normal;font-family:'Liberation Sans';color:#444;transform:translateY(-9.46px) translateX(-100%) scaleX(0.86);transform-origin:100% 0;">6</span>
<span class="t" style="left:696.5px;top:449.2px;font-size:10px;line-height:12.0px;font-weight:normal;font-family:'Liberation Sans';color:#444;transform:translateY(-9.46px) translateX(-100%) scaleX(0.86);transform-origin:100% 0;">6</span>
<span class="t" style="left:755px;top:449.2px;font-size:10px;line-height:12.0px;font-weight:normal;font-family:'Liberation Sans';color:#444;transform:translateY(-9.46px) scaleX(0.86);transform-origin:0 0;">Кега 30л</span>
<span class="t" style="left:153px;top:460.2px;font-size:10px;line-height:12.0px;font-weight:normal;font-family:'Liberation Sans';color:#444;transform:translateY(-9.46px) scaleX(0.86);transform-origin:0 0;">31.03.2021</span>
<span class="t" style="left:212px;top:460.2px;font-size:10px;line-height:12.0px;font-weight:normal;font-family:'Liberation Sans';color:#444;transform:translateY(-9.46px) scaleX(0.86);transform-origin:0 0;">Поступление товаров 0000-000004 от 31.03.2021 0:36:06</span>
<span class="t" style="left:496px;top:460.2px;font-size:10px;line-height:12.0px;font-weight:normal;font-family:'Liberation Sans';color:#444;transform:translateY(-9.46px) scaleX(0.86);transform-origin:0 0;">ИП Аникин С.</span>
<span class="t" style="left:644.5px;top:460.2px;font-size:10px;line-height:12.0px;font-weight:normal;font-family:'Liberation Sans';color:#444;transform:translateY(-9.46px) translateX(-100%) scaleX(0.86);transform-origin:100% 0;">7</span>
<span class="t" style="left:696.5px;top:460.2px;font-size:10px;line-height:12.0px;font-weight:normal;font-family:'Liberation Sans';color:#444;transform:translateY(-9.46px) translateX(-100%) scaleX(0.86);transform-origin:100% 0;">7</span>
<span class="t" style="left:755px;top:460.2px;font-size:10px;line-height:12.0px;font-weight:normal;font-family:'Liberation Sans';color:#444;transform:translateY(-9.46px) scaleX(0.86);transform-origin:0 0;">Кега 30л</span>
<span class="t" style="left:154.5px;top:490px;font-size:11.2px;line-height:13.44px;font-weight:bold;font-family:'Liberation Sans';color:#505044;transform:translateY(-10.60px) scaleX(1);transform-origin:0 0;text-decoration:underline;text-decoration-color:#8a8a80;text-decoration-skip-ink:none">Запрос №1 [Документы] (5 строк)</span>
<div style="left:151px;top:500px;width:924px;height:15px;background:#d2c68c"></div>
<div style="left:151px;top:515px;width:924px;height:11px;background:#f3f0de"></div>
<div style="left:151px;top:526px;width:924px;height:12px;background:#fff"></div>
<div style="left:151px;top:538px;width:924px;height:11px;background:#f3f0de"></div>
<div style="left:151px;top:549px;width:924px;height:12px;background:#fff"></div>
<div style="left:151px;top:561px;width:924px;height:11px;background:#f3f0de"></div>
<div style="left:151px;top:500px;width:924px;height:2px;background:#8c8567"></div>
<div style="left:151px;top:515px;width:924px;height:1px;background:#5a5644"></div>
<div style="left:151px;top:526px;width:924px;height:1px;background:#5a5644"></div>
<div style="left:151px;top:538px;width:924px;height:1px;background:#5a5644"></div>
<div style="left:151px;top:549px;width:924px;height:1px;background:#5a5644"></div>
<div style="left:151px;top:561px;width:924px;height:1px;background:#5a5644"></div>
<div style="left:151px;top:572px;width:924px;height:1px;background:#5a5644"></div>
<div style="left:436px;top:500px;width:1px;height:73px;background:#404040"></div>
<div style="left:536px;top:500px;width:1px;height:73px;background:#404040"></div>
<div style="left:612px;top:500px;width:1px;height:73px;background:#404040"></div>
<div style="left:700px;top:500px;width:1px;height:73px;background:#404040"></div>
<div style="left:776px;top:500px;width:1px;height:73px;background:#404040"></div>
<div style="left:968px;top:500px;width:1px;height:73px;background:#404040"></div>
<div style="left:1022px;top:500px;width:1px;height:73px;background:#404040"></div>
<div style="left:151px;top:500px;width:1px;height:73px;background:#8f8f8f"></div>
<div style="left:1074px;top:500px;width:1px;height:73px;background:#8a8a8a"></div>
<div style="left:431px;top:500px;width:0;height:0;border-top:5px solid #d4141c;border-left:5px solid transparent"></div>
<span class="t" style="left:301.0px;top:511.4px;font-size:8.8px;line-height:10.56px;font-weight:bold;font-family:'Liberation Sans';color:#34301f;transform:translateY(-8.33px) translateX(-50%) scaleX(1);transform-origin:50% 0;">Ссылка</span>
<svg style="left:153px;top:503px;" width="11" height="11" viewBox="0 0 11 11"><rect x="0.5" y="0" width="4.5" height="4" fill="#1b55a6"/><rect x="5" y="2" width="4" height="3.5" fill="#a8161f"/><rect x="2.5" y="5.5" width="4.5" height="4" fill="#229a2e"/></svg>
<div style="left:531px;top:500px;width:0;height:0;border-top:5px solid #d4141c;border-left:5px solid transparent"></div>
<span class="t" style="left:493.5px;top:511.4px;font-size:8.8px;line-height:10.56px;font-weight:bold;font-family:'Liberation Sans';color:#34301f;transform:translateY(-8.33px) translateX(-50%) scaleX(1);transform-origin:50% 0;">Период</span>
<svg style="left:438px;top:503px;" width="12" height="11" viewBox="0 0 12 11"><rect x="0.5" y="1.5" width="8" height="8" fill="#fff4ee" stroke="#e8b8a0"/><path d="M2.5 0 V2.5 M5 0 V2.5" stroke="#e8a888"/><circle cx="8" cy="7.5" r="3.3" fill="#e8f0fa" stroke="#5a7fb0"/><path d="M8 7.5 V5.2" stroke="#2a4a80"/></svg>
<div style="left:607px;top:500px;width:0;height:0;border-top:5px solid #d4141c;border-left:5px solid transparent"></div>
<span class="t" style="left:581.5px;top:511.4px;font-size:8.8px;line-height:10.56px;font-weight:bold;font-family:'Liberation Sans';color:#34301f;transform:translateY(-8.33px) translateX(-50%) scaleX(1);transform-origin:50% 0;">Контрагент</span>
<svg style="left:538px;top:503px;" width="11" height="10" viewBox="0 0 11 10"><rect x="0.5" y="0.5" width="10" height="9" fill="#fafafa" stroke="#a8a8a8"/><rect x="0.5" y="0.5" width="10" height="2" fill="#b5b5b5"/><path d="M3.8 2.5 V9.5 M7.2 2.5 V9.5" stroke="#c0c0c0"/></svg>
<div style="left:695px;top:500px;width:0;height:0;border-top:5px solid #d4141c;border-left:5px solid transparent"></div>
<span class="t" style="left:663.5px;top:511.4px;font-size:8.8px;line-height:10.56px;font-weight:bold;font-family:'Liberation Sans';color:#34301f;transform:translateY(-8.33px) translateX(-50%) scaleX(1);transform-origin:50% 0;">Номенклатура</span>
<svg style="left:614px;top:503px;" width="11" height="10" viewBox="0 0 11 10"><rect x="0.5" y="0.5" width="10" height="9" fill="#fafafa" stroke="#a8a8a8"/><rect x="0.5" y="0.5" width="10" height="2" fill="#b5b5b5"/><path d="M3.8 2.5 V9.5 M7.2 2.5 V9.5" stroke="#c0c0c0"/></svg>
<div style="left:771px;top:500px;width:0;height:0;border-top:5px solid #d4141c;border-left:5px solid transparent"></div>
<span class="t" style="left:745.5px;top:511.4px;font-size:8.8px;line-height:10.56px;font-weight:bold;font-family:'Liberation Sans';color:#34301f;transform:translateY(-8.33px) translateX(-50%) scaleX(1);transform-origin:50% 0;">Количество</span>
<svg style="left:702px;top:503px;" width="13" height="10" viewBox="0 0 13 10"><text x="0" y="8" font-size="8" font-weight="bold" font-family="Liberation Sans" fill="#333">1</text><rect x="4.5" y="1" width="4" height="8" rx="1" fill="#a7cfe0" stroke="#86b4c8" stroke-width="0.6"/><text x="5.4" y="7.6" font-size="6" font-family="Liberation Sans" fill="#5a8aa0">2</text><text x="9" y="8" font-size="8" font-weight="bold" font-family="Liberation Sans" fill="#333">3</text></svg>
<div style="left:963px;top:500px;width:0;height:0;border-top:5px solid #d4141c;border-left:5px solid transparent"></div>
<span class="t" style="left:879.5px;top:511.4px;font-size:8.8px;line-height:10.56px;font-weight:bold;font-family:'Liberation Sans';color:#34301f;transform:translateY(-8.33px) translateX(-50%) scaleX(1);transform-origin:50% 0;">АналитикаХозяйственнойОперации</span>
<svg style="left:778px;top:503px;" width="11" height="11" viewBox="0 0 11 11"><rect x="0.5" y="0" width="4.5" height="4" fill="#1b55a6"/><rect x="5" y="2" width="4" height="3.5" fill="#a8161f"/><rect x="2.5" y="5.5" width="4.5" height="4" fill="#229a2e"/></svg>
<div style="left:1017px;top:500px;width:0;height:0;border-top:5px solid #d4141c;border-left:5px solid transparent"></div>
<span class="t" style="left:1002.5px;top:511.4px;font-size:8.8px;line-height:10.56px;font-weight:bold;font-family:'Liberation Sans';color:#34301f;transform:translateY(-8.33px) translateX(-50%) scaleX(1);transform-origin:50% 0;">Приход</span>
<svg style="left:970px;top:503px;" width="13" height="10" viewBox="0 0 13 10"><text x="0" y="8" font-size="8" font-weight="bold" font-family="Liberation Sans" fill="#333">1</text><rect x="4.5" y="1" width="4" height="8" rx="1" fill="#a7cfe0" stroke="#86b4c8" stroke-width="0.6"/><text x="5.4" y="7.6" font-size="6" font-family="Liberation Sans" fill="#5a8aa0">2</text><text x="9" y="8" font-size="8" font-weight="bold" font-family="Liberation Sans" fill="#333">3</text></svg>
<div style="left:1069px;top:500px;width:0;height:0;border-top:5px solid #d4141c;border-left:5px solid transparent"></div>
<span class="t" style="left:1055.5px;top:511.4px;font-size:8.8px;line-height:10.56px;font-weight:bold;font-family:'Liberation Sans';color:#34301f;transform:translateY(-8.33px) translateX(-50%) scaleX(1);transform-origin:50% 0;">Расход</span>
<svg style="left:1024px;top:503px;" width="13" height="10" viewBox="0 0 13 10"><text x="0" y="8" font-size="8" font-weight="bold" font-family="Liberation Sans" fill="#333">1</text><rect x="4.5" y="1" width="4" height="8" rx="1" fill="#a7cfe0" stroke="#86b4c8" stroke-width="0.6"/><text x="5.4" y="7.6" font-size="6" font-family="Liberation Sans" fill="#5a8aa0">2</text><text x="9" y="8" font-size="8" font-weight="bold" font-family="Liberation Sans" fill="#333">3</text></svg>
<span class="t" style="left:153px;top:525.2px;font-size:10px;line-height:12.0px;font-weight:normal;font-family:'Liberation Sans';color:#444;transform:translateY(-9.46px) scaleX(0.86);transform-origin:0 0;">Возврат товаров поставщику 0000-000001 от 31.03.2021 0:44:50</span>
<span class="t" style="left:438px;top:525.2px;font-size:10px;line-height:12.0px;font-weight:normal;font-family:'Liberation Sans';color:#444;transform:translateY(-9.46px) scaleX(0.86);transform-origin:0 0;">31.03.2021 0:44:50</span>
<span class="t" style="left:538px;top:525.2px;font-size:10px;line-height:12.0px;font-weight:normal;font-family:'Liberation Sans';color:#444;transform:translateY(-9.46px) scaleX(0.86);transform-origin:0 0;">ИП Аникин С.</span>
<span class="t" style="left:614px;top:525.2px;font-size:10px;line-height:12.0px;font-weight:normal;font-family:'Liberation Sans';color:#444;transform:translateY(-9.46px) scaleX(0.86);transform-origin:0 0;">Кега 30л</span>
<span class="t" style="left:773.5px;top:525.2px;font-size:10px;line-height:12.0px;font-weight:normal;font-family:'Liberation Sans';color:#444;transform:translateY(-9.46px) translateX(-100%) scaleX(0.86);transform-origin:100% 0;">1</span>
<span class="t" style="left:778px;top:525.2px;font-size:10px;line-height:12.0px;font-weight:normal;font-family:'Liberation Sans';color:#444;transform:translateY(-9.46px) scaleX(0.86);transform-origin:0 0;">Возврат поставщику</span>
<span class="t" style="left:1071.5px;top:525.2px;font-size:10px;line-height:12.0px;font-weight:normal;font-family:'Liberation Sans';color:#444;transform:translateY(-9.46px) translateX(-100%) scaleX(0.86);transform-origin:100% 0;">1</span>
<span class="t" style="left:153px;top:536.2px;font-size:10px;line-height:12.0px;font-weight:normal;font-family:'Liberation Sans';color:#444;transform:translateY(-9.46px) scaleX(0.86);transform-origin:0 0;">Поступление товаров 0000-000002 от 30.03.2021 23:36:25</span>
<span class="t" style="left:438px;top:536.2px;font-size:10px;line-height:12.0px;font-weight:normal;font-family:'Liberation Sans';color:#444;transform:translateY(-9.46px) scaleX(0.86);transform-origin:0 0;">30.03.2021 23:36:25</span>
<span class="t" style="left:538px;top:536.2px;font-size:10px;line-height:12.0px;font-weight:normal;font-family:'Liberation Sans';color:#444;transform:translateY(-9.46px) scaleX(0.86);transform-origin:0 0;">ИП Аникин С.</span>
<span class="t" style="left:614px;top:536.2px;font-size:10px;line-height:12.0px;font-weight:normal;font-family:'Liberation Sans';color:#444;transform:translateY(-9.46px) scaleX(0.86);transform-origin:0 0;">Кега 50л</span>
<span class="t" style="left:773.5px;top:536.2px;font-size:10px;line-height:12.0px;font-weight:normal;font-family:'Liberation Sans';color:#444;transform:translateY(-9.46px) translateX(-100%) scaleX(0.86);transform-origin:100% 0;">3</span>
<span class="t" style="left:778px;top:536.2px;font-size:10px;line-height:12.0px;font-weight:normal;font-family:'Liberation Sans';color:#444;transform:translateY(-9.46px) scaleX(0.86);transform-origin:0 0;">Поступление товаров</span>
<span class="t" style="left:1019.5px;top:536.2px;font-size:10px;line-height:12.0px;font-weight:normal;font-family:'Liberation Sans';color:#444;transform:translateY(-9.46px) translateX(-100%) scaleX(0.86);transform-origin:100% 0;">3</span>
<span class="t" style="left:153px;top:548.2px;font-size:10px;line-height:12.0px;font-weight:normal;font-family:'Liberation Sans';color:#444;transform:translateY(-9.46px) scaleX(0.86);transform-origin:0 0;">Поступление товаров 0000-000002 от 30.03.2021 23:36:25</span>
<span class="t" style="left:438px;top:548.2px;font-size:10px;line-height:12.0px;font-weight:normal;font-family:'Liberation Sans';color:#444;transform:translateY(-9.46px) scaleX(0.86);transform-origin:0 0;">30.03.2021 23:36:25</span>
<span class="t" style="left:538px;top:548.2px;font-size:10px;line-height:12.0px;font-weight:normal;font-family:'Liberation Sans';color:#444;transform:translateY(-9.46px) scaleX(0.86);transform-origin:0 0;">ИП Аникин С.</span>
<span class="t" style="left:614px;top:548.2px;font-size:10px;line-height:12.0px;font-weight:normal;font-family:'Liberation Sans';color:#444;transform:translateY(-9.46px) scaleX(0.86);transform-origin:0 0;">Кега 30л</span>
<span class="t" style="left:773.5px;top:548.2px;font-size:10px;line-height:12.0px;font-weight:normal;font-family:'Liberation Sans';color:#444;transform:translateY(-9.46px) translateX(-100%) scaleX(0.86);transform-origin:100% 0;">6</span>
<span class="t" style="left:778px;top:548.2px;font-size:10px;line-height:12.0px;font-weight:normal;font-family:'Liberation Sans';color:#444;transform:translateY(-9.46px) scaleX(0.86);transform-origin:0 0;">Поступление товаров</span>
<span class="t" style="left:1019.5px;top:548.2px;font-size:10px;line-height:12.0px;font-weight:normal;font-family:'Liberation Sans';color:#444;transform:translateY(-9.46px) translateX(-100%) scaleX(0.86);transform-origin:100% 0;">6</span>
<span class="t" style="left:153px;top:559.2px;font-size:10px;line-height:12.0px;font-weight:normal;font-family:'Liberation Sans';color:#444;transform:translateY(-9.46px) scaleX(0.86);transform-origin:0 0;">Поступление товаров 0000-000004 от 31.03.2021 0:36:06</span>
<span class="t" style="left:438px;top:559.2px;font-size:10px;line-height:12.0px;font-weight:normal;font-family:'Liberation Sans';color:#444;transform:translateY(-9.46px) scaleX(0.86);transform-origin:0 0;">31.03.2021 0:36:06</span>
<span class="t" style="left:538px;top:559.2px;font-size:10px;line-height:12.0px;font-weight:normal;font-family:'Liberation Sans';color:#444;transform:translateY(-9.46px) scaleX(0.86);transform-origin:0 0;">ИП Аникин С.</span>
<span class="t" style="left:614px;top:559.2px;font-size:10px;line-height:12.0px;font-weight:normal;font-family:'Liberation Sans';color:#444;transform:translateY(-9.46px) scaleX(0.86);transform-origin:0 0;">Кега 50л</span>
<span class="t" style="left:773.5px;top:559.2px;font-size:10px;line-height:12.0px;font-weight:normal;font-family:'Liberation Sans';color:#444;transform:translateY(-9.46px) translateX(-100%) scaleX(0.86);transform-origin:100% 0;">7</span>
<span class="t" style="left:778px;top:559.2px;font-size:10px;line-height:12.0px;font-weight:normal;font-family:'Liberation Sans';color:#444;transform:translateY(-9.46px) scaleX(0.86);transform-origin:0 0;">Поступление товаров</span>
<span class="t" style="left:1019.5px;top:559.2px;font-size:10px;line-height:12.0px;font-weight:normal;font-family:'Liberation Sans';color:#444;transform:translateY(-9.46px) translateX(-100%) scaleX(0.86);transform-origin:100% 0;">7</span>
<span class="t" style="left:153px;top:571.2px;font-size:10px;line-height:12.0px;font-weight:normal;font-family:'Liberation Sans';color:#444;transform:translateY(-9.46px) scaleX(0.86);transform-origin:0 0;">Поступление товаров 0000-000004 от 31.03.2021 0:36:06</span>
<span class="t" style="left:438px;top:571.2px;font-size:10px;line-height:12.0px;font-weight:normal;font-family:'Liberation Sans';color:#444;transform:translateY(-9.46px) scaleX(0.86);transform-origin:0 0;">31.03.2021 0:36:06</span>
<span class="t" style="left:538px;top:571.2px;font-size:10px;line-height:12.0px;font-weight:normal;font-family:'Liberation Sans';color:#444;transform:translateY(-9.46px) scaleX(0.86);transform-origin:0 0;">ИП Аникин С.</span>
<span class="t" style="left:614px;top:571.2px;font-size:10px;line-height:12.0px;font-weight:normal;font-family:'Liberation Sans';color:#444;transform:translateY(-9.46px) scaleX(0.86);transform-origin:0 0;">Кега 30л</span>
<span class="t" style="left:773.5px;top:571.2px;font-size:10px;line-height:12.0px;font-weight:normal;font-family:'Liberation Sans';color:#444;transform:translateY(-9.46px) translateX(-100%) scaleX(0.86);transform-origin:100% 0;">7</span>
<span class="t" style="left:778px;top:571.2px;font-size:10px;line-height:12.0px;font-weight:normal;font-family:'Liberation Sans';color:#444;transform:translateY(-9.46px) scaleX(0.86);transform-origin:0 0;">Поступление товаров</span>
<span class="t" style="left:1019.5px;top:571.2px;font-size:10px;line-height:12.0px;font-weight:normal;font-family:'Liberation Sans';color:#444;transform:translateY(-9.46px) translateX(-100%) scaleX(0.86);transform-origin:100% 0;">7</span>
<div style="left:131.5px;top:307.0px;width:9px;height:9px;border:1px solid #bcbcbc;background:#fff"><div style="left:1px;top:3px;width:5px;height:1px;background:#777"></div></div>
<div style="left:135.5px;top:316.0px;width:1px;height:58.0px;background:#c8c8c8"></div>
<div style="left:135.5px;top:374px;width:16px;height:1px;background:#c8c8c8"></div>
<div style="left:131.5px;top:394.0px;width:9px;height:9px;border:1px solid #bcbcbc;background:#fff"><div style="left:1px;top:3px;width:5px;height:1px;background:#777"></div></div>
<div style="left:135.5px;top:403.0px;width:1px;height:58.0px;background:#c8c8c8"></div>
<div style="left:135.5px;top:461px;width:16px;height:1px;background:#c8c8c8"></div>
<div style="left:131.5px;top:482.0px;width:9px;height:9px;border:1px solid #bcbcbc;background:#fff"><div style="left:1px;top:3px;width:5px;height:1px;background:#777"></div></div>
<div style="left:135.5px;top:491.0px;width:1px;height:81.0px;background:#c8c8c8"></div>
<div style="left:135.5px;top:572px;width:16px;height:1px;background:#c8c8c8"></div>
<div style="left:0px;top:638px;width:1280px;height:22px;background:#f2f2f2;border-top:1px solid #e0e0e0"></div>
<div style="left:114px;top:639px;width:1px;height:21px;background:#d4d4d4"></div>
<div style="left:267px;top:639px;width:1px;height:21px;background:#d4d4d4"></div>
<div style="left:268px;top:639px;width:222px;height:21px;background:#fbfbfb"></div>
<div style="left:490px;top:639px;width:1px;height:21px;background:#d4d4d4"></div>
<div style="left:573px;top:639px;width:1px;height:21px;background:#d4d4d4"></div>
<div style="left:269.5px;top:656.5px;width:219px;height:1.5px;background:#e36a6a"></div>
<span class="t" style="left:21.9px;top:653px;font-size:10px;line-height:12.0px;font-weight:normal;font-family:'Liberation Sans';color:#444;transform:translateY(-9.46px) scaleX(0.8475);transform-origin:0 0;">Начальная страница</span>
<span class="t" style="left:121.5px;top:653px;font-size:10px;line-height:12.0px;font-weight:normal;font-family:'Liberation Sans';color:#444;transform:translateY(-9.46px) scaleX(0.8621);transform-origin:0 0;">Возвраты товаров поставщикам</span>
<span class="t" style="left:273.6px;top:653px;font-size:10px;line-height:12.0px;font-weight:normal;font-family:'Liberation Sans';color:#444;transform:translateY(-9.46px) scaleX(0.8692);transform-origin:0 0;">C:\User...\зза.mcr: Управляемая консоль отчетов *</span>
<span class="t" style="left:498.6px;top:653px;font-size:10px;line-height:12.0px;font-weight:normal;font-family:'Liberation Sans';color:#444;transform:translateY(-9.46px) scaleX(0.8487);transform-origin:0 0;">Обслуживание</span>
<div style="left:0px;top:660px;width:1280px;height:21px;background:#adadad;border-top:1px solid #9e9e9e;border-bottom:1px solid #bcc0c3"></div>
<div style="left:2px;top:665px;width:14px;height:13px;background:#fafafa;border-radius:1px"></div>
<span class="t" style="left:20.2px;top:675px;font-size:10px;line-height:12.0px;font-weight:normal;font-family:'Liberation Sans';color:#d9303c;transform:translateY(-9.46px) scaleX(0.874);transform-origin:0 0;">Текущие вызовы: 6</span>
<span class="t" style="left:105.6px;top:675px;font-size:10px;line-height:12.0px;font-weight:normal;font-family:'Liberation Sans';color:#d9303c;transform:translateY(-9.46px) scaleX(0.85);transform-origin:0 0;">Накопленные вызовы: 1 317</span>
<div style="left:0px;top:681px;width:1280px;height:5px;background:#1c2a31"></div>
<div style="left:442px;top:681px;width:24px;height:5px;background:#3c4a50"></div>
<svg style="left:137px;top:11px;" width="10" height="7" viewBox="0 0 10 7"><path d="M0.3 3.5 L4 0.3 L4 2.4 L9.5 2.4 L9.5 4.6 L4 4.6 L4 6.7 Z" fill="#444"/></svg>
<svg style="left:161px;top:11px;" width="10" height="7" viewBox="0 0 10 7"><path d="M9.7 3.5 L6 0.3 L6 2.4 L0.5 2.4 L0.5 4.6 L6 4.6 L6 6.7 Z" fill="#b8b8b8"/></svg>
<svg style="left:173px;top:37px;" width="5" height="3" viewBox="0 0 5 3"><path d="M0.5 0.5 L4.5 0.5 L2.5 2.8 Z" fill="#666"/></svg>
<svg style="left:546px;top:37px;" width="5" height="3" viewBox="0 0 5 3"><path d="M0.5 0.5 L4.5 0.5 L2.5 2.8 Z" fill="#666"/></svg>
<svg style="left:686px;top:37px;" width="5" height="3" viewBox="0 0 5 3"><path d="M0.5 0.5 L4.5 0.5 L2.5 2.8 Z" fill="#666"/></svg>
<svg style="left:1259px;top:37px;" width="5" height="3" viewBox="0 0 5 3"><path d="M0.5 0.5 L4.5 0.5 L2.5 2.8 Z" fill="#666"/></svg>
<svg style="left:192px;top:61px;" width="5" height="3" viewBox="0 0 5 3"><path d="M0.5 0.5 L4.5 0.5 L2.5 2.8 Z" fill="#666"/></svg>
<svg style="left:372.5px;top:61px;" width="5" height="3" viewBox="0 0 5 3"><path d="M0.5 0.5 L4.5 0.5 L2.5 2.8 Z" fill="#666"/></svg>
<svg style="left:1252.5px;top:226px;" width="5" height="3" viewBox="0 0 5 3"><path d="M0.5 0.5 L4.5 0.5 L2.5 2.8 Z" fill="#666"/></svg>
<svg style="left:1094px;top:270px;" width="5" height="3" viewBox="0 0 5 3"><path d="M0.5 0.5 L4.5 0.5 L2.5 2.8 Z" fill="#666"/></svg>
<svg style="left:193px;top:32px;" width="10" height="10" viewBox="0 0 10 10"><rect x="0" y="0" width="10" height="10" rx="1" fill="#6796cc"/><rect x="2" y="0.5" width="6" height="3.5" fill="#d3e2f2"/><rect x="2.5" y="6" width="5" height="4" fill="#b3cde9"/></svg>
<svg style="left:227px;top:33px;" width="8" height="8" viewBox="0 0 8 8"><path d="M1 0.5 L7.5 4 L1 7.5 Z" fill="#3ac23c"/></svg>
<svg style="left:305px;top:33px;" width="10" height="10" viewBox="0 0 10 10"><rect x="0.5" y="0.5" width="8" height="8" rx="1" fill="#fff" stroke="#a0a0a0"/><line x1="0.5" y1="2.5" x2="8.5" y2="2.5" stroke="#a0a0a0"/><line x1="3.5" y1="2.5" x2="3.5" y2="8.5" stroke="#b8b8b8"/><path d="M6 7 L9.8 7 L8 5.2 M9.8 7 L8 8.8" stroke="#3a9a3a" fill="none" stroke-width="1.2"/></svg>
<svg style="left:338px;top:32px;" width="11" height="11" viewBox="0 0 11 11"><rect x="0.5" y="0.5" width="8" height="8" fill="#e4edf7" stroke="#8fa8c8"/><path d="M5.5 0.5 L8.5 0.5 L8.5 3.5 Z" fill="#e06060"/><circle cx="4.8" cy="4.8" r="2.4" fill="none" stroke="#6a6a6a" stroke-width="1"/><line x1="6.6" y1="6.6" x2="10" y2="10" stroke="#a07030" stroke-width="1.4"/></svg>
<svg style="left:430px;top:32px;" width="11" height="11" viewBox="0 0 11 11"><circle cx="5.5" cy="5.5" r="4.8" fill="#d8ebf8" stroke="#3f7fb8" stroke-width="1.1"/><path d="M5.5 5.5 L5.5 1.5 M5.5 5.5 L7.5 2.5" stroke="#2a5a8a" stroke-width="1"/></svg>
<svg style="left:564px;top:32px;" width="12" height="11" viewBox="0 0 12 11"><rect x="0.5" y="0.5" width="6" height="3" fill="#2d5c93"/><line x1="0" y1="5.5" x2="12" y2="5.5" stroke="#3a6aa0" stroke-width="1"/><rect x="5.5" y="7.5" width="6" height="3" fill="#fff" stroke="#3a6aa0"/></svg>
<svg style="left:598px;top:32px;" width="11" height="11" viewBox="0 0 11 11"><circle cx="5.5" cy="5.5" r="4" fill="none" stroke="#b8b8b8" stroke-width="1.6" stroke-dasharray="1.6 0.9"/><circle cx="5.5" cy="5.5" r="2" fill="none" stroke="#bbb" stroke-width="1"/></svg>
<span class="t" style="left:635px;top:41.5px;font-size:10.5px;line-height:12.6px;font-weight:bold;font-family:'Liberation Sans';color:#333;transform:translateY(-9.94px) scaleX(1);transform-origin:0 0;">?</span>
<svg style="left:134px;top:57px;" width="10" height="10" viewBox="0 0 10 10"><circle cx="5" cy="5" r="4.8" fill="#3aa84a"/><path d="M5 2.2 L5 7.8 M2.2 5 L7.8 5" stroke="#fff" stroke-width="1.6"/></svg>
<span class="t" style="left:219.8px;top:65.5px;font-size:10.5px;line-height:12.6px;font-weight:bold;font-family:'Liberation Serif';color:#666;transform:translateY(-9.94px) scaleX(0.95);transform-origin:0 0;">B</span>
<svg style="left:251px;top:57px;" width="9" height="9" viewBox="0 0 9 9"><path d="M4.5 0.5 L8.5 4.5 L6 4.5 L6 8.5 L3 8.5 L3 4.5 L0.5 4.5 Z" fill="#48a6e6"/></svg>
<svg style="left:270px;top:57px;" width="9" height="9" viewBox="0 0 9 9"><path d="M4.5 8.5 L8.5 4.5 L6 4.5 L6 0.5 L3 0.5 L3 4.5 L0.5 4.5 Z" fill="#48a6e6"/></svg>
<svg style="left:137px;top:83px;" width="7" height="7" viewBox="0 0 7 7"><circle cx="3.5" cy="3.5" r="2.8" fill="#f4f4f4" stroke="#c8c8c8" stroke-width="0.8"/><path d="M2 3.5 L5 3.5 M3.5 2 L3.5 5" stroke="#aaa" stroke-width="0.8"/></svg>
<svg style="left:148px;top:81px;" width="9" height="10" viewBox="0 0 9 10"><rect x="0.5" y="0.5" width="8" height="9" fill="#fff" stroke="#8aa0b8"/><path d="M2.5 2.5 L2.5 6 M2.5 2.5 L4.5 2.5 M2.5 4 L4 4 M5 4 L6.5 6.5 M6.5 4 L5 6.5" stroke="#d06020" stroke-width="0.9" fill="none"/></svg>
<svg style="left:137px;top:102px;" width="7" height="7" viewBox="0 0 7 7"><circle cx="3.5" cy="3.5" r="2.8" fill="#f4f4f4" stroke="#c8c8c8" stroke-width="0.8"/><path d="M2 3.5 L5 3.5 M3.5 2 L3.5 5" stroke="#aaa" stroke-width="0.8"/></svg>
<svg style="left:148px;top:100px;" width="9" height="10" viewBox="0 0 9 10"><rect x="0.5" y="0.5" width="8" height="9" fill="#fff" stroke="#8aa0b8"/><path d="M2.5 2.5 L2.5 6 M2.5 2.5 L4.5 2.5 M2.5 4 L4 4 M5 4 L6.5 6.5 M6.5 4 L5 6.5" stroke="#d06020" stroke-width="0.9" fill="none"/></svg>
<svg style="left:137px;top:121px;" width="7" height="7" viewBox="0 0 7 7"><circle cx="3.5" cy="3.5" r="2.8" fill="#f4f4f4" stroke="#c8c8c8" stroke-width="0.8"/><path d="M2 3.5 L5 3.5" stroke="#aaa" stroke-width="0.8"/></svg>
<svg style="left:148px;top:119px;" width="9" height="10" viewBox="0 0 9 10"><rect x="0.5" y="0.5" width="8" height="9" fill="#fff" stroke="#8aa0b8"/><path d="M2.5 2.5 L2.5 6 M2.5 2.5 L4.5 2.5 M2.5 4 L4 4 M5 4 L6.5 6.5 M6.5 4 L5 6.5" stroke="#d06020" stroke-width="0.9" fill="none"/></svg>
<svg style="left:137px;top:141px;" width="7" height="7" viewBox="0 0 7 7"><circle cx="3.5" cy="3.5" r="2.8" fill="#f4f4f4" stroke="#c8c8c8" stroke-width="0.8"/><path d="M2 3.5 L5 3.5 M3.5 2 L3.5 5" stroke="#aaa" stroke-width="0.8"/></svg>
<svg style="left:148px;top:139px;" width="9" height="10" viewBox="0 0 9 10"><rect x="0.5" y="0.5" width="8" height="9" fill="#fff" stroke="#8aa0b8"/><path d="M2.5 2.5 L2.5 6 M2.5 2.5 L4.5 2.5 M2.5 4 L4 4 M5 4 L6.5 6.5 M6.5 4 L5 6.5" stroke="#d06020" stroke-width="0.9" fill="none"/></svg>
<span class="t" style="left:465.5px;top:65.5px;font-size:11px;line-height:13.2px;font-weight:bold;font-family:'Liberation Serif';color:#333;transform:translateY(-10.41px) scaleX(1);transform-origin:0 0;">&amp;</span>
<svg style="left:1120px;top:221px;" width="12" height="11" viewBox="0 0 12 11"><rect x="0.5" y="0.5" width="7" height="9" fill="#f4f4f4" stroke="#8a9ab0"/><path d="M2 3 L6 3 M2 5 L5 5" stroke="#999" stroke-width="0.8"/><path d="M5.5 7.5 L7.5 9.5 L11 5.5" stroke="#3aa040" stroke-width="1.8" fill="none"/></svg>
<svg style="left:1198px;top:222px;" width="11" height="9" viewBox="0 0 11 9"><text x="0.5" y="7" font-size="8" font-style="italic" font-family="Liberation Serif" fill="#2e4e78">f</text><path d="M4 1.5 Q3 4 4 6.8 M8.5 1.5 Q9.5 4 8.5 6.8" stroke="#3a5a80" stroke-width="0.8" fill="none"/><path d="M5 2.8 L7.5 6 M7.5 2.8 L5 6" stroke="#2e4e78" stroke-width="0.9"/></svg>
<svg style="left:131px;top:251px;" width="9" height="6" viewBox="0 0 9 6"><path d="M1 1 L4.5 4.5 L8 1" stroke="#e8707a" stroke-width="1.2" fill="none"/></svg>
<svg style="left:134px;top:266px;" width="10" height="9" viewBox="0 0 10 9"><rect x="0" y="0" width="10" height="9" fill="#b9b9b9"/><path d="M3.3 0 L3.3 9 M6.6 0 L6.6 9 M0 3 L10 3 M0 6 L10 6" stroke="#e4e4e4" stroke-width="0.7"/></svg>
<svg style="left:308px;top:267px;" width="9" height="9" viewBox="0 0 9 9"><rect x="0.5" y="0.5" width="8" height="8" fill="#fff" stroke="#5c8fc8"/><rect x="0.5" y="0.5" width="8" height="2" fill="#5c8fc8"/><path d="M4.5 3.5 L4.5 7.5 M2.5 5.5 L6.5 5.5" stroke="#2ea02e" stroke-width="1.3"/></svg>
<svg style="left:1177px;top:9px;" width="11" height="10" viewBox="0 0 11 10"><rect x="0.5" y="0.5" width="10" height="9" fill="none" stroke="#c4c4c4"/><rect x="2.5" y="0.5" width="6" height="3.5" fill="none" stroke="#cacaca"/><rect x="3" y="6.5" width="5" height="3" fill="#cacaca"/></svg>
<svg style="left:1197px;top:9px;" width="12" height="10" viewBox="0 0 12 10"><rect x="3" y="0.5" width="6" height="3" fill="none" stroke="#c4c4c4"/><rect x="0.5" y="3.5" width="11" height="4" rx="1.5" fill="none" stroke="#c4c4c4"/><rect x="3" y="6" width="6" height="3.5" fill="#fff" stroke="#c4c4c4"/></svg>
<svg style="left:1218px;top:9px;" width="10" height="10" viewBox="0 0 10 10"><path d="M0.5 0.5 L7 0.5 L9.5 3 L9.5 9.5 L0.5 9.5 Z" fill="none" stroke="#c4c4c4"/><circle cx="5" cy="5.5" r="2" fill="none" stroke="#aaa"/><line x1="6.5" y1="7" x2="8.5" y2="9" stroke="#aaa"/></svg>
<svg style="left:1241px;top:10px;" width="3" height="8" viewBox="0 0 3 8"><rect x="0.5" y="0" width="2" height="2" fill="#666"/><rect x="0.5" y="3" width="2" height="2" fill="#666"/><rect x="0.5" y="6" width="2" height="2" fill="#666"/></svg>
<svg style="left:1259px;top:11px;" width="7" height="6" viewBox="0 0 7 6"><path d="M0.8 0.5 L6.2 5.5 M6.2 0.5 L0.8 5.5" stroke="#666" stroke-width="1"/></svg>
<svg style="left:1253px;top:83px;" width="5" height="4" viewBox="0 0 5 4"><path d="M0.5 3.5 L2.5 0.8 L4.5 3.5 Z" fill="#888"/></svg>
<svg style="left:1253px;top:192px;" width="5" height="4" viewBox="0 0 5 4"><path d="M0.5 0.5 L2.5 3.2 L4.5 0.5 Z" fill="#555"/></svg>
<svg style="left:401px;top:204px;" width="4" height="5" viewBox="0 0 4 5"><path d="M3.5 0.5 L0.8 2.5 L3.5 4.5 Z" fill="#bbb"/></svg>
<svg style="left:1241px;top:204px;" width="4" height="5" viewBox="0 0 4 5"><path d="M0.5 0.5 L3.2 2.5 L0.5 4.5 Z" fill="#555"/></svg>
<svg style="left:1260px;top:292px;" width="5" height="4" viewBox="0 0 5 4"><path d="M0.5 3.5 L2.5 0.8 L4.5 3.5 Z" fill="#888"/></svg>
<svg style="left:1260px;top:610px;" width="5" height="4" viewBox="0 0 5 4"><path d="M0.5 0.5 L2.5 3.2 L4.5 0.5 Z" fill="#555"/></svg>
<svg style="left:135px;top:623px;" width="4" height="5" viewBox="0 0 4 5"><path d="M3.5 0.5 L0.8 2.5 L3.5 4.5 Z" fill="#bbb"/></svg>
<svg style="left:1248px;top:623px;" width="4" height="5" viewBox="0 0 4 5"><path d="M0.5 0.5 L3.2 2.5 L0.5 4.5 Z" fill="#555"/></svg>
<svg style="left:255.5px;top:646px;" width="6" height="6" viewBox="0 0 6 6"><path d="M0.7 0.7 L5.3 5.3 M5.3 0.7 L0.7 5.3" stroke="#555" stroke-width="1.3"/></svg>
<svg style="left:479.5px;top:646px;" width="6" height="6" viewBox="0 0 6 6"><path d="M0.7 0.7 L5.3 5.3 M5.3 0.7 L0.7 5.3" stroke="#555" stroke-width="1.3"/></svg>
<svg style="left:561.5px;top:646px;" width="6" height="6" viewBox="0 0 6 6"><path d="M0.7 0.7 L5.3 5.3 M5.3 0.7 L0.7 5.3" stroke="#aaa" stroke-width="1.3"/></svg>
<svg style="left:4px;top:644px;" width="10" height="9" viewBox="0 0 10 9"><path d="M5 0.3 L9.8 4.8 L8.3 4.8 L8.3 8.7 L5.8 8.7 L5.8 6 L4.2 6 L4.2 8.7 L1.7 8.7 L1.7 4.8 L0.2 4.8 Z" fill="#333"/></svg>
<svg style="left:4px;top:666px;" width="12" height="11" viewBox="0 0 12 11"><rect x="3.5" y="0.5" width="8" height="6" fill="#fff" stroke="#444"/><rect x="0.5" y="3.5" width="8" height="6" fill="#fff" stroke="#444"/><rect x="3" y="9" width="3" height="1.5" fill="#444"/></svg>
<svg style="left:8px;top:8px;" width="10" height="9" viewBox="0 0 10 9"><path d="M0 1 H10 M0 3.5 H10 M0 6 H10 M0 8.5 H10" stroke="#454952" stroke-width="1.2"/></svg>
<svg style="left:8px;top:32px;" width="10" height="10" viewBox="0 0 10 10"><circle cx="5" cy="5" r="4.8" fill="#454952"/><path d="M7 3 A2.5 2.5 0 1 0 7 7 M2.5 5 H6" stroke="#232733" stroke-width="1.1" fill="none"/></svg>
<svg style="left:8px;top:55px;" width="10" height="10" viewBox="0 0 10 10"><path d="M0.5 0.5 V8 M3.5 0.5 V5 M6.5 0.5 V5 M9.5 0.5 V8 M0.5 2.5 H9.5 M3 8 L5 5.5 L7 8" stroke="#454952" stroke-width="1.1" fill="none"/></svg>
<svg style="left:8px;top:78px;" width="10" height="10" viewBox="0 0 10 10"><path d="M0 1 H10 M0 4 H10 M0 7 H10 M0 9.5 H10 M5 1 V9.5" stroke="#454952" stroke-width="1.6"/></svg>
<svg style="left:8px;top:101px;" width="10" height="10" viewBox="0 0 10 10"><rect x="0" y="3.5" width="10" height="6.5" fill="#454952"/><path d="M3 3.5 V1.2 H7 V3.5" stroke="#454952" stroke-width="1.1" fill="none"/></svg>
<svg style="left:8px;top:125px;" width="10" height="10" viewBox="0 0 10 10"><circle cx="5" cy="5" r="4.8" fill="#454952"/><path d="M4 7.5 V2.5 H6 A1.5 1.5 0 0 1 6 5.5 H3.5" stroke="#232733" stroke-width="1.1" fill="none"/></svg>
<svg style="left:9px;top:148px;" width="8" height="11" viewBox="0 0 8 11"><rect x="0" y="1.5" width="8" height="9" fill="#454952"/><rect x="1" y="0" width="6" height="1.2" fill="#454952"/></svg>
<svg style="left:8px;top:171px;" width="10" height="10" viewBox="0 0 10 10"><circle cx="5" cy="3" r="2.6" fill="#454952"/><path d="M0.5 10 Q0.5 6 5 6 Q9.5 6 9.5 10 Z" fill="#454952"/></svg>
<svg style="left:8px;top:195px;" width="10" height="10" viewBox="0 0 10 10"><path d="M7.99 3.59 L9.76 3.84 L9.76 6.16 L7.99 6.41 L8.11 6.12 L9.19 7.54 L7.54 9.19 L6.12 8.11 L6.41 7.99 L6.16 9.76 L3.84 9.76 L3.59 7.99 L3.88 8.11 L2.46 9.19 L0.81 7.54 L1.89 6.12 L2.01 6.41 L0.24 6.16 L0.24 3.84 L2.01 3.59 L1.89 3.88 L0.81 2.46 L2.46 0.81 L3.88 1.89 L3.59 2.01 L3.84 0.24 L6.16 0.24 L6.41 2.01 L6.12 1.89 L7.54 0.81 L9.19 2.46 L8.11 3.88 Z" fill="#454952"/><circle cx="5" cy="5" r="1.5" fill="#232733"/></svg>
</body></html>
